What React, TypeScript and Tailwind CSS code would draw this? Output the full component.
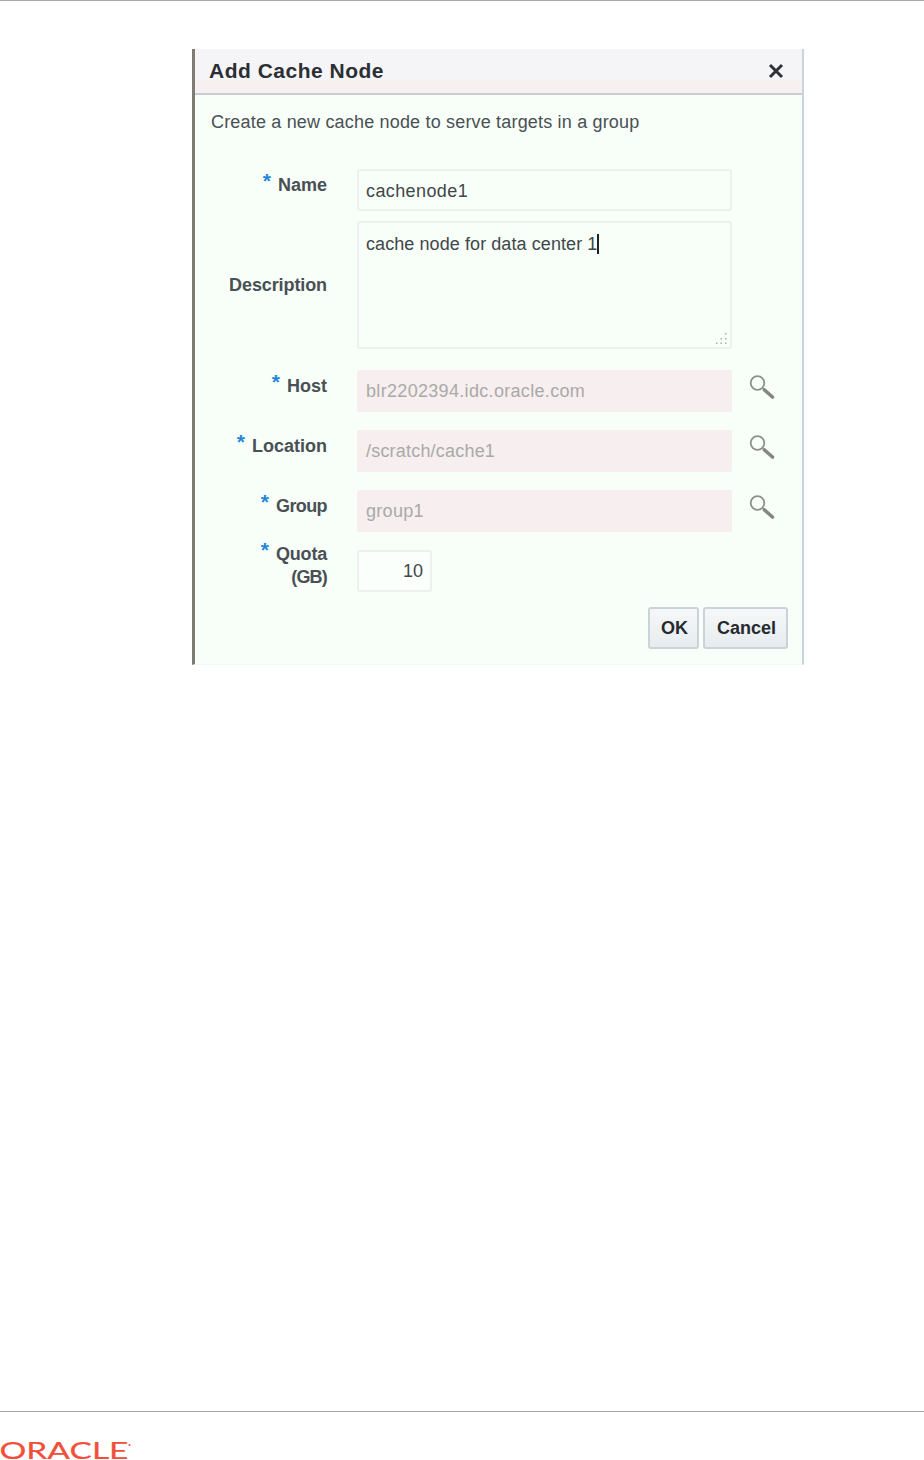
import React from "react";

const font = "font-['Liberation_Sans',Arial,sans-serif]";

function SearchIcon() {
  return (
    <svg width="26" height="26" viewBox="0 0 26 26" className="ml-[17px] mt-[4px] shrink-0">
      <circle cx="8.5" cy="9" r="6.8" fill="none" stroke="#8f908b" strokeWidth="1.8" />
      <path d="M13.5 14 L16 16" stroke="#a5a6a1" strokeWidth="2" />
      <path d="M15.5 16 L23.5 23" stroke="#85867f" strokeWidth="3.6" strokeLinecap="round" />
    </svg>
  );
}

function Label({ text, required, second, tracking = "" }: { text: string; required?: boolean; second?: string; tracking?: string }) {
  return (
    <div className="w-[132px] shrink-0 text-right text-[18px] leading-[23px] font-bold text-[#4a4f55]">
      <div className="flex justify-end">
        {required && <span className="relative top-[-5px] mr-[7px] text-[#1e88d8] text-[21px] leading-[23px]">*</span>}
        <span className={tracking}>{text}</span>
      </div>
      {second && <div className="tracking-[-0.8px]">{second}</div>}
    </div>
  );
}

function DisabledRow({ label, value, className, tracking, labelTracking }: { label: string; value: string; className: string; tracking: string; labelTracking?: string }) {
  return (
    <div className={`flex items-start ${className}`}>
      <div className="mt-[5px]">
        <Label text={label} required tracking={labelTracking} />
      </div>
      <div className={`ml-[30px] w-[375px] h-[42px] bg-[#f6eeef] rounded-[2px] pl-[9px] text-[18px] leading-[42px] text-[#a9aaa8] ${tracking}`}>
        {value}
      </div>
      <SearchIcon />
    </div>
  );
}

export default function App() {
  return (
    <div className={`${font} w-[924px] h-[1460px] bg-white flex flex-col overflow-hidden`}>
      <div className="h-px bg-[#a6a6a6] shrink-0" />
      <div className="h-[1410px] shrink-0 pt-[48px] pl-[192px]">
        <div className="w-[612px] h-[616px] border-l-[3px] border-l-[#7f7c76] border-r-[2px] border-r-[#c9d4de] border-b border-b-[#eef6fb] bg-[#f7fff8] flex flex-col">
          <div className="h-[46px] shrink-0 border-b-[2px] border-b-[#c6cdd5] bg-[linear-gradient(#f5f5f7_0,#f5f5f7_31px,#f7eff0_31px,#f7eff0_100%)] flex items-start justify-between pl-[14px] pr-[18px]">
            <span className="text-[21px] leading-[24px] mt-[10px] font-bold text-[#2b2f33] tracking-[0.5px]">Add Cache Node</span>
            <svg width="16" height="16" viewBox="0 0 16 16" className="mt-[14px]">
              <path d="M2 2 L14 14 M14 2 L2 14" stroke="#2f3236" strokeWidth="3" />
            </svg>
          </div>

          <div className="flex-1 flex flex-col">
            <p className="ml-[16px] mt-[15px] text-[18px] leading-[24px] text-[#4a4f55] tracking-[0.18px]">
              Create a new cache node to serve targets in a group
            </p>

            <div className="flex items-start mt-[35px]">
              <div className="mt-[5px]">
                <Label text="Name" required />
              </div>
              <div className="ml-[30px] w-[375px] h-[42px] border-2 border-[#edf0ee] rounded-[3px] pl-[7px] text-[18px] leading-[40px] text-[#41464b] tracking-[0.4px]">
                cachenode1
              </div>
            </div>

            <div className="flex items-center mt-[10px]">
              <Label text="Description" tracking="tracking-[-0.1px]" />
              <div className="relative ml-[30px] w-[375px] h-[128px] border-2 border-[#edf0ee] rounded-[3px] pl-[7px] pt-[9px] text-[18px] leading-[24px] text-[#41464b] tracking-[0.08px]">
                <span>cache node for data center 1</span>
                <span className="inline-block w-[1.5px] h-[20px] bg-[#222] align-[-4px]" />
                <svg width="14" height="14" viewBox="0 0 14 14" className="absolute right-[2px] bottom-[1px]">
                  <g fill="#a9aeaa">
                    <rect x="11" y="1" width="1.5" height="1.5" />
                    <rect x="6.5" y="6" width="1.5" height="1.5" />
                    <rect x="11" y="6" width="1.5" height="1.5" />
                    <rect x="2" y="10.5" width="1.5" height="1.5" />
                    <rect x="6.5" y="10.5" width="1.5" height="1.5" />
                    <rect x="11" y="10.5" width="1.5" height="1.5" />
                  </g>
                </svg>
              </div>
            </div>

            <DisabledRow className="mt-[21px]" tracking="tracking-[0.32px]" label="Host" value="blr2202394.idc.oracle.com" />
            <DisabledRow className="mt-[18px]" tracking="tracking-[0.2px]" label="Location" value="/scratch/cache1" />
            <DisabledRow className="mt-[18px]" tracking="tracking-[0.3px]" labelTracking="tracking-[-0.6px]" label="Group" value="group1" />

            <div className="flex items-start mt-[18px]">
              <div className="-mt-[7px]">
                <Label text="Quota" required second="(GB)" tracking="tracking-[-0.2px]" />
              </div>
              <div className="ml-[30px] w-[75px] h-[42px] border-2 border-[#edf0ee] rounded-[3px] pr-[7px] text-right text-[18px] leading-[38px] text-[#41464b] bg-[#fbfffc]">
                10
              </div>
            </div>

            <div className="flex justify-end mt-[15px] mr-[14px] gap-[4px]">
              <button className="w-[51px] h-[42px] pl-[2px] rounded-[3px] border-2 border-[#ccd3d8] bg-[linear-gradient(#f6f7f8,#e6ecee)] text-[18px] font-bold text-[#252a30]">
                OK
              </button>
              <button className="w-[85px] h-[42px] pl-[2px] rounded-[3px] border-2 border-[#ccd3d8] bg-[linear-gradient(#f6f7f8,#e6ecee)] text-[18px] font-bold text-[#252a30]">
                Cancel
              </button>
            </div>
          </div>
        </div>
      </div>
      <div className="h-px bg-[#a6a6a6] shrink-0" />
      <svg width="134" height="48" viewBox="0 0 134 48" className="shrink-0">
        <text x="-0.5" y="47" textLength="129" lengthAdjust="spacingAndGlyphs" fontFamily="Lato, 'Liberation Sans', sans-serif" fontWeight="400" fontSize="23.5" fill="#f24f3b" stroke="#f24f3b" strokeWidth="0.2">
          ORACLE
        </text>
        <circle cx="129.5" cy="33" r="1" fill="#f24f3b" />
      </svg>
    </div>
  );
}
